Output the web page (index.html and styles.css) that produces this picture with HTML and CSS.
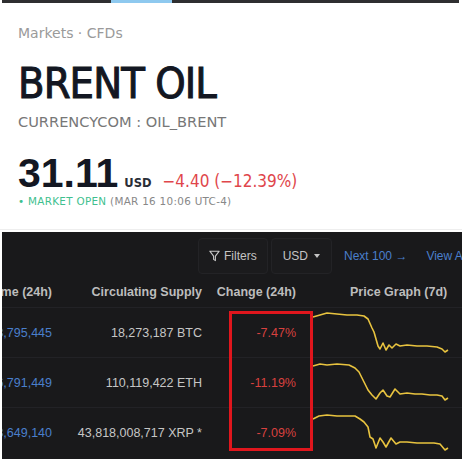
FILE: index.html
```html
<!DOCTYPE html>
<html lang="en">
  <head>
    <meta charset="UTF-8" />
    <title>Brent Oil</title>
    <link rel="stylesheet" href="styles.css">
  </head>
  <body>
    <div class="tabline">
      <div class="seg"></div>
      <div class="seg active"></div>
      <div class="seg"></div>
    </div>

    <div class="quote">
      <p class="crumbs">Markets · CFDs</p>
      <h1>BRENT OIL</h1>
      <p class="ticker">CURRENCYCOM : OIL_BRENT</p>
      <div class="price">
        <span class="last">31.11</span>
        <span class="cur">USD</span>
        <span class="chg">&minus;4.40 (&minus;12.39%)</span>
      </div>
      <p class="status"><span class="open">&bull; MARKET OPEN</span> (MAR 16 10:06 UTC-4)</p>
    </div>
    <div class="sep"></div>

    <div class="panel">
      <div class="toolbar">
        <button class="tbtn">
          <svg width="11" height="12" viewBox="0 0 11 12"><path d="M0.8 1.2h9.4L6.4 6.2v4.4L4.6 9.4V6.2z" fill="none" stroke="#c8c8c8" stroke-width="1.1" stroke-linejoin="round"/></svg>
          Filters
        </button>
        <button class="tbtn">USD <span class="caret"></span></button>
        <a class="link">Next 100 &rarr;</a>
        <a class="link">View All</a>
      </div>

      <div class="table">
        <div class="row head">
          <div class="c1">Volume (24h)</div>
          <div class="c2">Circulating Supply</div>
          <div class="c3">Change (24h)</div>
          <div class="c4">Price Graph (7d)</div>
        </div>
        <div class="row">
          <div class="c1 blue">$33,795,445</div>
          <div class="c2">18,273,187 BTC</div>
          <div class="c3 red">-7.47%</div>
          <div class="c4">
            <svg class="spark" width="150" height="50"><polyline points="1,9 8,7 15,5 25,6 35,7 45,7 52,8 56,11 60,20 62,24 64,31 66,38 68,41 71,35 74,42 77,37 80,40 84,36 88,38 95,37 105,38 115,38 125,39 130,41 133,44 136,42"/></svg>
          </div>
        </div>
        <div class="row">
          <div class="c1 blue">$26,791,449</div>
          <div class="c2">110,119,422 ETH</div>
          <div class="c3 red">-11.19%</div>
          <div class="c4">
            <svg class="spark" width="150" height="50"><polyline points="1,8 8,6 15,7 25,6 37,7 43,10 47,14 52,24 56,32 60,37 64,41 68,35 71,32 75,38 78,39 83,31 88,36 95,35 103,36 110,36 118,37 125,37 130,38 133,42 136,40"/></svg>
          </div>
        </div>
        <div class="row">
          <div class="c1 blue">$3,649,140</div>
          <div class="c2">43,818,008,717 XRP *</div>
          <div class="c3 red">-7.09%</div>
          <div class="c4">
            <svg class="spark" width="150" height="50"><polyline points="1,11 7,8 15,7 25,8 35,8 43,8 48,11 52,14 56,19 58,29 61,31 64,40 68,30 71,34 74,39 79,30 84,36 88,34 95,34 105,35 115,35 122,35 128,36 133,42 136,40"/></svg>
          </div>
        </div>
        <div class="mark"></div>
      </div>
    </div>
  </body>
</html>
```

FILE: styles.css
```css
body{
  margin: 0;
  width: 462px;
  height: 462px;
  overflow: hidden;
  background: #fff;
  font-family: "DejaVu Sans", sans-serif;
}
.tabline{
  display: grid;
  grid-template-columns: 109px 61px 1fr;
  height: 3px;
  margin: 0 3px 0 2px;
}
.seg{
  background-color: #2f2f31;
}
.seg.active{
  background-color: #8ec9ef;
}

.quote{
  padding: 0 0 0 18px;
}
.crumbs{
  margin: 22px 0 0;
  font-size: 14px;
  color: #9a9a9a;
}
h1{
  margin: 18px 0 0;
  font-size: 43px;
  font-weight: normal;
  font-family: "DejaVu Sans Condensed", "DejaVu Sans", sans-serif;
  color: #131722;
  line-height: 48px;
  letter-spacing: -0.9px;
  -webkit-text-stroke: 1px #131722;
}
.ticker{
  margin: 6px 0 0;
  font-size: 14.6px;
  color: #777;
}
.price{
  display: flex;
  align-items: baseline;
  margin-top: 20px;
  height: 40px;
}
.last{
  font-family: "Liberation Sans", Arial, sans-serif;
  font-size: 41px;
  font-weight: bold;
  color: #131722;
}
.cur{
  margin-left: 6px;
  font-size: 11.5px;
  font-weight: bold;
  color: #2a2e36;
}
.chg{
  margin-left: 11px;
  font-family: "DejaVu Sans Condensed", "DejaVu Sans", sans-serif;
  font-size: 17px;
  color: #e0464b;
}
.status{
  margin: 5px 0 0;
  font-size: 10.4px;
  color: #888;
  letter-spacing: 0.3px;
}
.open{
  color: #3fbf8f;
}
.sep{
  margin-top: 22px;
  height: 1px;
  background: #eee;
}

.panel{
  margin: 2px 0 0 2px;
  height: 227px;
  background: #19191b;
  overflow: hidden;
  font-family: "Liberation Sans", Arial, sans-serif;
}
.toolbar{
  display: flex;
  align-items: flex-start;
  height: 44px;
  padding: 6px 0 0 196px;
  box-sizing: border-box;
  white-space: nowrap;
}
.tbtn{
  display: flex;
  align-items: center;
  gap: 4px;
  height: 36px;
  padding: 0 10px;
  margin-right: 3px;
  background: #1b1b1d;
  border: 1px solid #232326;
  border-radius: 4px;
  color: #c4c4c4;
  font-family: "Liberation Sans", Arial, sans-serif;
  font-size: 12px;
}
.tbtn + .tbtn{
  padding: 0 11px;
}
.caret{
  width: 0;
  height: 0;
  border-left: 3px solid transparent;
  border-right: 3px solid transparent;
  border-top: 4px solid #c4c4c4;
  margin-left: 2px;
}
.link{
  margin-left: 9px;
  margin-right: 10px;
  line-height: 36px;
  color: #4a7fcc;
  font-size: 12px;
}

.table{
  position: relative;
  margin-left: -60px;
}
.row{
  display: grid;
  grid-template-columns: 118px 150px 102px 150px;
  align-items: center;
  height: 50px;
  border-top: 1px solid #222226;
  font-size: 12.5px;
  color: #c6c6c6;
  box-sizing: border-box;
}
.row.head{
  height: 31px;
  border-top: 0;
  font-weight: bold;
  color: #bdbdbd;
}
.c1, .c2, .c3{
  text-align: right;
  padding-right: 8px;
  white-space: nowrap;
}
.c3{
  padding-right: 16px;
}
.c4{
  height: 100%;
}
.head .c4{
  height: auto;
  padding-left: 38px;
  white-space: nowrap;
}
.blue{
  color: #4a7fcc;
}
.red{
  color: #d8413f;
}
.spark{
  display: block;
}
.spark polyline{
  fill: none;
  stroke: #e8c33f;
  stroke-width: 1.6;
  stroke-linejoin: round;
}
.mark{
  position: absolute;
  left: 287px;
  top: 35px;
  width: 78px;
  height: 134px;
  border: 3px solid #e0161d;
}
```
